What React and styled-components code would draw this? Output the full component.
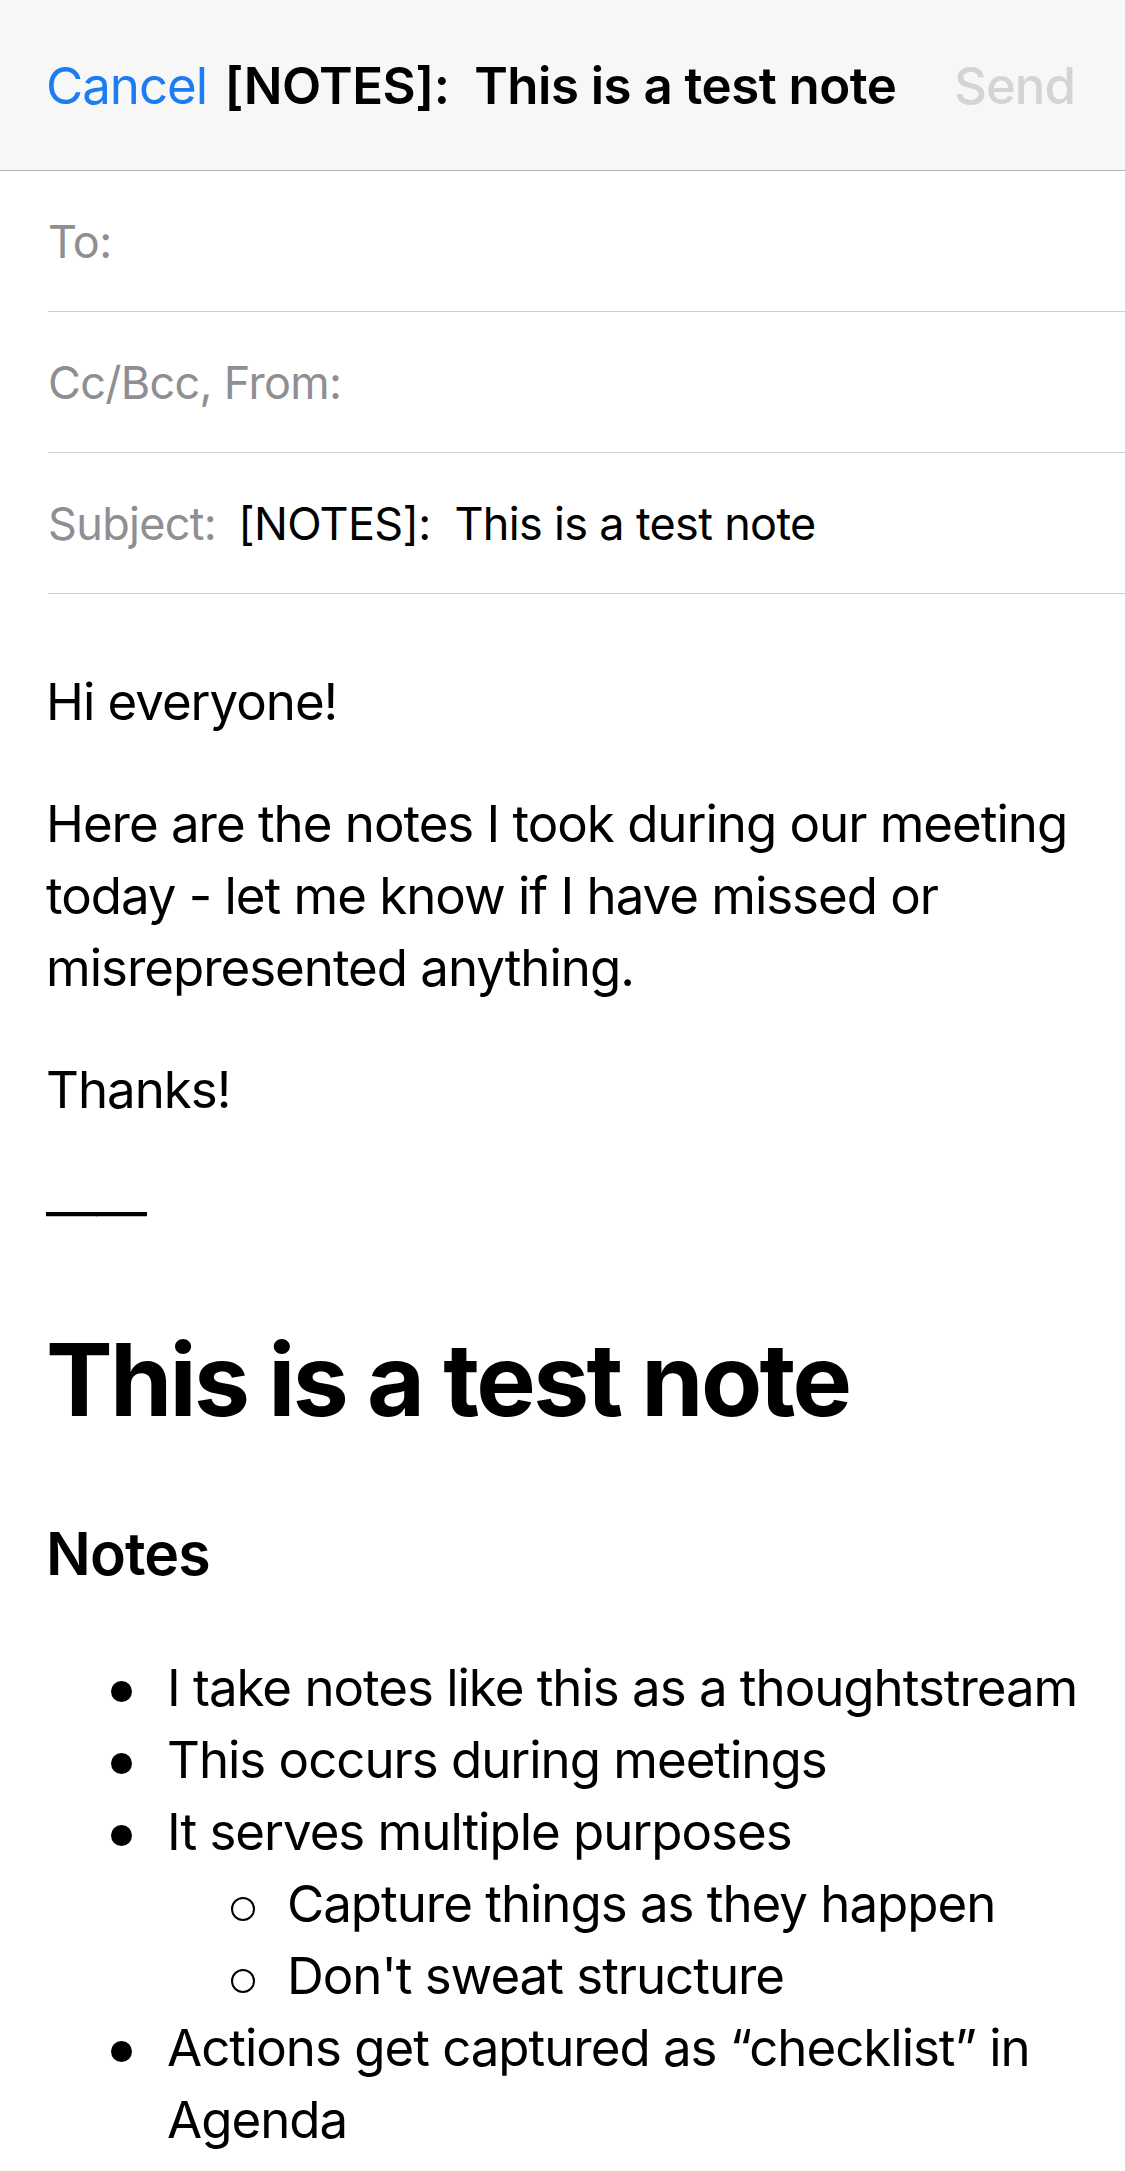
import React from "react";
import styled, { createGlobalStyle } from "styled-components";

const Global = createGlobalStyle`
  html, body { margin: 0; padding: 0; background: #ffffff; }
  body {
    font-family: Inter, "Noto Sans", Roboto, "Liberation Sans", sans-serif;
    color: #000;
    -webkit-font-smoothing: antialiased;
  }
  * { box-sizing: border-box; }
`;

const Page = styled.div`
  width: 1125px;
  min-height: 2171px;
  background: #fff;
  overflow: hidden;
`;

const NavBar = styled.header`
  height: 171px;
  background: #f7f7f7;
  border-bottom: 1.5px solid #b3b3b3;
  display: grid;
  grid-template-columns: 1fr auto 1fr;
  align-items: center;
  padding: 0 50px 0 46px;
  font-size: 51px;
  letter-spacing: -0.02em;
`;

const NavButton = styled.span`
  color: ${(p) => p.$color};
  font-weight: ${(p) => p.$weight || 400};
  justify-self: ${(p) => p.$align};
`;

const NavTitle = styled.span`
  font-weight: 600;
  white-space: pre;
  color: #000;
  letter-spacing: -0.01em;
`;

const Fields = styled.section`
  display: flex;
  flex-direction: column;
`;

const FieldRow = styled.div`
  height: 141px;
  margin-left: 48px;
  border-bottom: 1.5px solid #cfcfd2;
  display: flex;
  align-items: center;
  font-size: 45px;
  letter-spacing: -0.015em;
  gap: 22px;
  padding-left: 0;
`;

const FieldLabel = styled.span`
  color: #8e8e93;
`;

const FieldValue = styled.span`
  color: #000;
  white-space: pre;
`;

const Body = styled.article`
  padding: 72px 20px 0 46px;
  font-size: 51px;
  line-height: 72px;
  letter-spacing: -0.02em;
`;

const Para = styled.p`
  margin: 0 0 ${(p) => p.$after ?? 50}px 0;
`;

const Title = styled.h1`
  margin: 72px 0 78px 0;
  font-size: 100px;
  line-height: 120px;
  font-weight: 700;
  letter-spacing: -0.027em;
`;

const Subtitle = styled.h2`
  margin: 0 0 62px 0;
  font-size: 59px;
  line-height: 72px;
  font-weight: 600;
  letter-spacing: -0.015em;
`;

const List = styled.ul`
  list-style: none;
  margin: 0;
  padding: 0 0 0 ${(p) => p.$indent}px;
`;

const Item = styled.li`
  position: relative;
  &::before {
    content: "";
    position: absolute;
    top: 29px;
    left: ${(p) => (p.$hollow ? -56 : -56)}px;
    width: ${(p) => (p.$hollow ? 20 : 21)}px;
    height: ${(p) => (p.$hollow ? 20 : 21)}px;
    border-radius: 50%;
    background: ${(p) => (p.$hollow ? "transparent" : "#000")};
    border: ${(p) => (p.$hollow ? "2.5px solid #000" : "none")};
  }
`;

export default function App() {
  return (
    <Page>
      <Global />
      <NavBar>
        <NavButton $color="#1b7cf3" $align="start">Cancel</NavButton>
        <NavTitle>{"[NOTES]:  This is a test note"}</NavTitle>
        <NavButton $color="#d4d4d4" $weight={500} $align="end">Send</NavButton>
      </NavBar>

      <Fields>
        <FieldRow>
          <FieldLabel>To:</FieldLabel>
        </FieldRow>
        <FieldRow>
          <FieldLabel>Cc/Bcc, From:</FieldLabel>
        </FieldRow>
        <FieldRow>
          <FieldLabel>Subject:</FieldLabel>
          <FieldValue>{"[NOTES]:  This is a test note"}</FieldValue>
        </FieldRow>
      </Fields>

      <Body>
        <Para>Hi everyone!</Para>
        <Para>
          Here are the notes I took during our meeting today - let me know if I
          have missed or misrepresented anything.
        </Para>
        <Para>Thanks!</Para>
        <Para $after={0}>——</Para>
        <Title>This is a test note</Title>
        <Subtitle>Notes</Subtitle>
        <List $indent={121}>
          <Item>I take notes like this as a thoughtstream</Item>
          <Item>This occurs during meetings</Item>
          <Item>
            It serves multiple purposes
            <List $indent={120}>
              <Item $hollow>Capture things as they happen</Item>
              <Item $hollow>Don't sweat structure</Item>
            </List>
          </Item>
          <Item>Actions get captured as “checklist” in Agenda</Item>
        </List>
      </Body>
    </Page>
  );
}
